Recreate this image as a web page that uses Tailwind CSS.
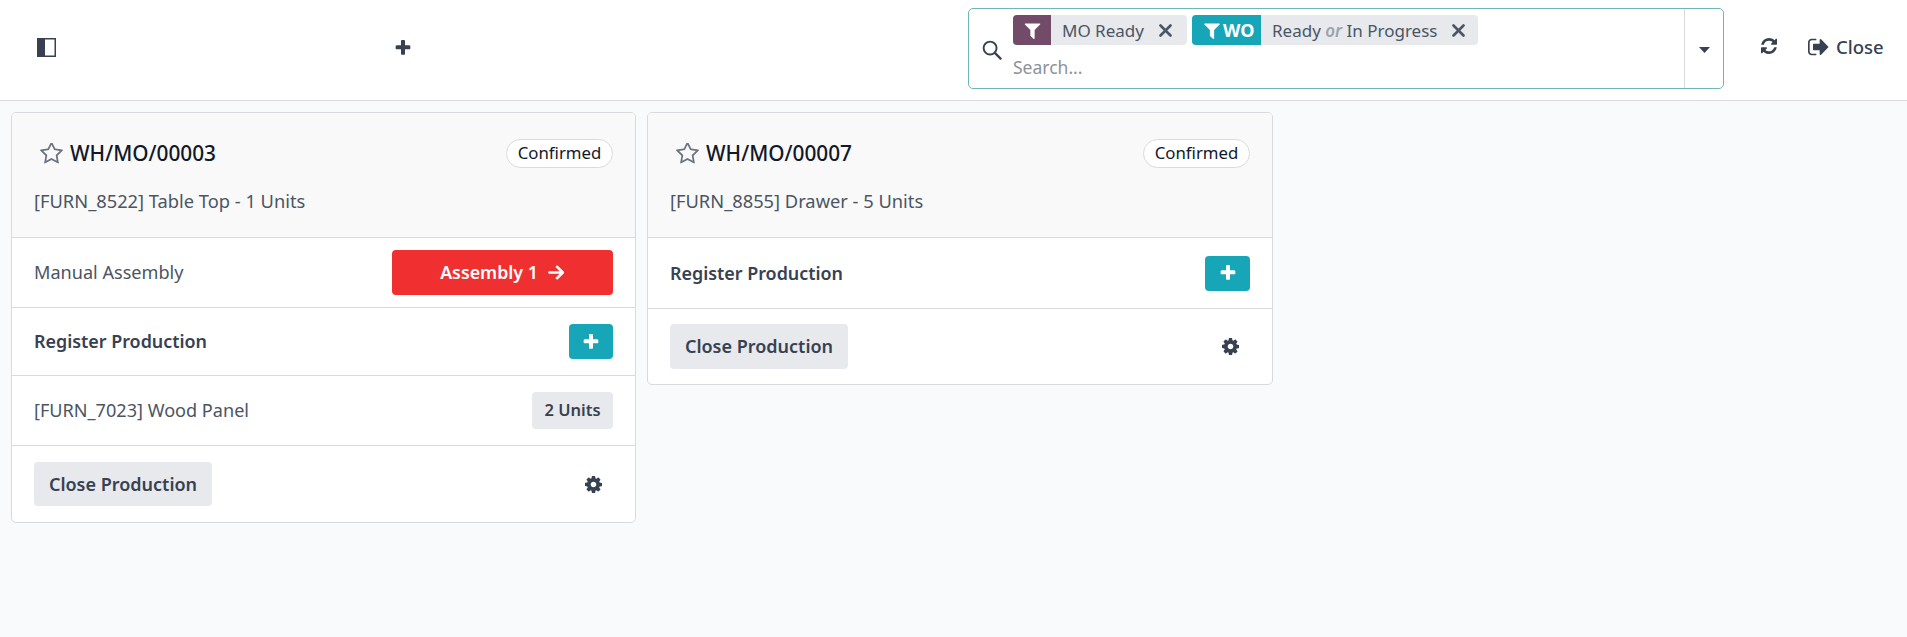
<!DOCTYPE html>
<html lang="en">
<head>
    <meta charset="UTF-8">
    <title>Shop Floor</title>
    <script src="https://cdn.jsdelivr.net/npm/@tailwindcss/browser@4"></script>
</head>
<body class="bg-[#f9fafb] text-[#374151] font-['Noto_Sans',sans-serif] text-[17px] h-[637px] overflow-hidden">
    <!-- top bar -->
    <header class="h-[101px] bg-white border-b border-[#d8dadd] flex items-center pb-[6px]">
        <button class="ml-[37px] w-[19px] h-[19px] flex">
            <svg class="w-[19px] h-[19px]" viewBox="0 0 19 19"><rect x="0.75" y="0.75" width="17.5" height="17.5" fill="none" stroke="#374151" stroke-width="1.5"/><rect x="1" y="1" width="7" height="17" fill="#374151"/></svg>
        </button>
        <button class="ml-[339px] mt-[2px] w-[16px] h-[16px] flex">
            <svg class="w-[16px] h-[16px]" viewBox="128 128 1536 1536"><path fill="#374151" d="M1600 736v192q0 40-28 68t-68 28h-416v416q0 40-28 68t-68 28h-192q-40 0-68-28t-28-68v-416h-416q-40 0-68-28t-28-68v-192q0-40 28-68t68-28h416v-416q0-40 28-68t68-28h192q40 0 68 28t28 68v416h416q40 0 68 28t28 68z"/></svg>
        </button>

        <div class="ml-[557px] w-[756px] h-[81px] mt-[3px] border border-[#6fb6b8] rounded-[5px] flex">
            <div class="w-[44px] flex items-center pl-[13px] pt-[2px] shrink-0">
                <svg class="w-[20px] h-[20px]" viewBox="0 0 21 21"><circle cx="8.500" cy="8.500" r="6.800" fill="none" stroke="#374151" stroke-width="2"/><path d="M13.500 13.500l6 6" stroke="#374151" stroke-width="2.400" stroke-linecap="round"/></svg>
            </div>
            <div class="flex-1 pt-[6px]">
                <div class="flex gap-[5px]">
                    <div class="h-[30px] w-[174px] bg-[#e7e9ed] rounded-[4px] flex items-center overflow-hidden">
                        <span class="w-[38px] h-full bg-[#714b67] flex items-center justify-center">
                            <svg class="w-[17px] h-[17px]" viewBox="128 128 1536 1536"><path fill="#fff" d="M1595 295q17 41-14 70l-493 493v742q0 42-39 59-13 5-25 5-27 0-45-19l-256-256q-19-19-19-45v-486l-493-493q-31-29-14-70 17-39 59-39h1280q42 0 59 39z"/></svg>
                        </span>
                        <span class="ml-[11px] text-[#4b5563] pt-[1px]">MO Ready</span>
                        <svg class="ml-[15px] w-[13px] h-[13px]" viewBox="0 0 13 13"><path d="M1.500 1.500l10 10M11.500 1.500l-10 10" stroke="#4b5563" stroke-width="2.600" stroke-linecap="round"/></svg>
                    </div>
                    <div class="h-[30px] w-[286px] bg-[#e7e9ed] rounded-[4px] flex items-center overflow-hidden">
                        <span class="w-[69px] h-full bg-[#17a5b8] flex items-center pl-[11px] gap-[2px] text-white font-bold text-[18px]">
                            <svg class="w-[18px] h-[17px] shrink-0" viewBox="128 128 1536 1536"><path fill="#fff" d="M1595 295q17 41-14 70l-493 493v742q0 42-39 59-13 5-25 5-27 0-45-19l-256-256q-19-19-19-45v-486l-493-493q-31-29-14-70 17-39 59-39h1280q42 0 59 39z"/></svg>
                            WO
                        </span>
                        <span class="ml-[11px] text-[#4b5563] pt-[1px]">Ready <em class="text-[#9ca3af] font-semibold">or</em> In Progress</span>
                        <svg class="ml-[15px] w-[13px] h-[13px]" viewBox="0 0 13 13"><path d="M1.500 1.500l10 10M11.500 1.500l-10 10" stroke="#4b5563" stroke-width="2.600" stroke-linecap="round"/></svg>
                    </div>
                </div>
                <div class="mt-[6px] text-[#8b929c] text-[17.500px] leading-[32px]">Search...</div>
            </div>
            <div class="w-[39px] border-l border-[#d8dadd] flex items-center justify-center pt-[2px] shrink-0">
                <svg class="w-[11px] h-[6px]" viewBox="0 0 11 6"><path d="M0 0h11L5.500 6z" fill="#374151"/></svg>
            </div>
        </div>

        <button class="ml-[37px] mb-[2px] flex">
            <svg class="w-[16px] h-[16px]" viewBox="128 128 1536 1536"><path fill="#374151" d="M1639 1056q0 5-1 7-64 268-268 434.500t-478 166.500q-146 0-282.500-55t-243.500-157l-129 129q-19 19-45 19t-45-19-19-45v-448q0-26 19-45t45-19h448q26 0 45 19t19 45-19 45l-137 137q71 66 161 102t187 36q134 0 250-65t186-179q11-17 53-117 8-23 30-23h192q13 0 22.500 9.500t9.500 22.500zm25-800v448q0 26-19 45t-45 19h-448q-26 0-45-19t-19-45 19-45l138-138q-148-137-349-137-134 0-250 65t-186 179q-11 17-53 117-8 23-30 23h-199q-13 0-22.500-9.500t-9.500-22.500v-7q65-268 270-434.500t480-166.500q146 0 284 55.500t245 156.500l130-129q19-19 45-19t45 19 19 45z"/></svg>
        </button>
        <button class="ml-[30px] flex items-center gap-[7px] font-medium text-[18.500px]">
            <svg class="w-[22px] h-[20px]" viewBox="0 128 1664 1536"><path fill="#374151" d="M704 1440q0 4 1 20t.5 26.500-3 23.500-10 19.500-20.500 6.500h-320q-119 0-203.500-84.500t-84.500-203.500v-704q0-119 84.500-203.500t203.500-84.500h320q13 0 22.500 9.500t9.500 22.500q0 4 1 20t.5 26.500-3 23.500-10 19.500-20.500 6.500h-320q-66 0-113 47t-47 113v704q0 66 47 113t113 47h312l11.500 1 11.500 3 8 5.500 7 9 2 13.500zm928-544q0 26-19 45l-544 544q-19 19-45 19t-45-19-19-45v-288h-448q-26 0-45-19t-19-45v-384q0-26 19-45t45-19h448v-288q0-26 19-45t45-19 45 19l544 544q19 19 19 45z"/></svg>
            Close
        </button>
    </header>

    <!-- work order cards -->
    <main class="flex items-start gap-[11px] pl-[11px] pt-[11px]">
        <section class="w-[625px] bg-white border border-[#d8dadd] rounded-[5px] overflow-hidden">
            <div class="h-[125px] bg-[#f9f9f9] border-b border-[#d8dadd] px-[22px]">
                <div class="flex items-center justify-between pt-[25px] h-[55px]">
                    <div class="flex items-center gap-[7px] ml-[6px] mt-[2px] text-[#111827] font-medium text-[20.800px]">
                        <svg class="w-[23px] h-[22px]" viewBox="64 128 1664 1600"><path fill="#6b7280" d="M1201 1004l306-297-422-62-189-382-189 382-422 62 306 297-73 421 378-199 377 199zm527-357q0 22-26 48l-363 354 86 500q1 7 1 20 0 50-41 50-19 0-40-12l-449-236-449 236q-22 12-40 12-21 0-31.500-14.500t-10.500-35.500q0-6 2-20l86-500-364-354q-25-27-25-48 0-37 56-46l502-73 225-455q19-41 49-41t49 41l225 455 502 73q56 9 56 46z"/></svg>
                        WH/MO/00003
                    </div>
                    <span class="h-[29px] w-[107px] flex items-center justify-center bg-white border border-[#d8dadd] rounded-full text-[#111827] text-[16.800px]">Confirmed</span>
                </div>
                <p class="mt-[21px] leading-[24px] text-[#4b5563] text-[18.300px]">[FURN_8522] Table Top - 1 Units</p>
            </div>
            <div class="h-[70px] border-b border-[#d8dadd] px-[22px] flex items-center justify-between">
                <span class="text-[#4b5563] text-[18.100px]">Manual Assembly</span>
                <button class="w-[221px] h-[45px] bg-[#f03030] rounded-[4px] text-white font-semibold text-[17.800px] flex items-center justify-center gap-[10px]">
                    Assembly 1
                    <svg class="w-[17px] h-[15px]" viewBox="0 0 17 15"><path d="M1.500 7.500h13M9 1.800l5.800 5.700L9 13.200" fill="none" stroke="#fff" stroke-width="2.600" stroke-linecap="round" stroke-linejoin="round"/></svg>
                </button>
            </div>
            <div class="h-[68px] border-b border-[#d8dadd] px-[22px] flex items-center justify-between">
                <span class="font-semibold text-[17.900px]">Register Production</span>
                <button class="w-[44px] h-[35px] bg-[#17a5b8] rounded-[4px] flex items-center justify-center">
                    <svg class="w-[16px] h-[16px]" viewBox="128 128 1536 1536"><path fill="#fff" d="M1600 736v192q0 40-28 68t-68 28h-416v416q0 40-28 68t-68 28h-192q-40 0-68-28t-28-68v-416h-416q-40 0-68-28t-28-68v-192q0-40 28-68t68-28h416v-416q0-40 28-68t68-28h192q40 0 68 28t28 68v416h416q40 0 68 28t28 68z"/></svg>
                </button>
            </div>
            <div class="h-[70px] border-b border-[#d8dadd] px-[22px] flex items-center justify-between">
                <span class="text-[#4b5563] text-[18.100px]">[FURN_7023] Wood Panel</span>
                <span class="w-[81px] h-[37px] bg-[#e7e9ed] rounded-[4px] flex items-center justify-center font-semibold text-[16.500px]">2 Units</span>
            </div>
            <div class="h-[76px] px-[22px] flex items-center justify-between">
                <button class="w-[178px] h-[44px] bg-[#e7e9ed] rounded-[4px] font-semibold text-[18px]">Close Production</button>
                <svg class="w-[17px] h-[17px] mr-[11px]" viewBox="128 128 1536 1536"><path fill="#374151" d="M1152 896q0-106-75-181t-181-75-181 75-75 181 75 181 181 75 181-75 75-181zm512-109v222q0 12-8 23t-20 13l-185 28q-19 54-39 91 35 50 107 138 10 12 10 25t-9 23q-27 37-99 108t-94 71q-12 0-26-9l-138-108q-44 23-91 38-16 136-29 186-7 28-36 28h-222q-14 0-24.500-8.500t-11.500-21.500l-28-184q-49-16-90-37l-141 107q-10 9-25 9-14 0-25-11-126-114-165-168-7-10-7-23 0-12 8-23 15-21 51-66.500t54-70.500q-27-50-41-99l-183-27q-13-2-21-12.500t-8-23.500v-222q0-12 8-23t19-13l186-28q14-46 39-92-40-57-107-138-10-12-10-24 0-10 9-23 26-36 98.500-107.500t94.500-71.500q13 0 26 10l138 107q44-23 91-38 16-136 29-186 7-28 36-28h222q14 0 24.500 8.500t11.500 21.500l28 184q49 16 90 37l142-107q9-9 24-9 13 0 25 10 129 119 165 170 7 8 7 22 0 12-8 23-15 21-51 66.500t-54 70.500q26 50 41 98l183 28q13 2 21 12.500t8 23.500z"/></svg>
            </div>
        </section>

        <section class="w-[626px] bg-white border border-[#d8dadd] rounded-[5px] overflow-hidden">
            <div class="h-[125px] bg-[#f9f9f9] border-b border-[#d8dadd] px-[22px]">
                <div class="flex items-center justify-between pt-[25px] h-[55px]">
                    <div class="flex items-center gap-[7px] ml-[6px] mt-[2px] text-[#111827] font-medium text-[20.800px]">
                        <svg class="w-[23px] h-[22px]" viewBox="64 128 1664 1600"><path fill="#6b7280" d="M1201 1004l306-297-422-62-189-382-189 382-422 62 306 297-73 421 378-199 377 199zm527-357q0 22-26 48l-363 354 86 500q1 7 1 20 0 50-41 50-19 0-40-12l-449-236-449 236q-22 12-40 12-21 0-31.500-14.500t-10.500-35.500q0-6 2-20l86-500-364-354q-25-27-25-48 0-37 56-46l502-73 225-455q19-41 49-41t49 41l225 455 502 73q56 9 56 46z"/></svg>
                        WH/MO/00007
                    </div>
                    <span class="h-[29px] w-[107px] flex items-center justify-center bg-white border border-[#d8dadd] rounded-full text-[#111827] text-[16.800px]">Confirmed</span>
                </div>
                <p class="mt-[21px] leading-[24px] text-[#4b5563] text-[18.300px]">[FURN_8855] Drawer - 5 Units</p>
            </div>
            <div class="h-[71px] border-b border-[#d8dadd] px-[22px] flex items-center justify-between">
                <span class="font-semibold text-[17.900px]">Register Production</span>
                <button class="w-[45px] h-[35px] bg-[#17a5b8] rounded-[4px] flex items-center justify-center">
                    <svg class="w-[16px] h-[16px]" viewBox="128 128 1536 1536"><path fill="#fff" d="M1600 736v192q0 40-28 68t-68 28h-416v416q0 40-28 68t-68 28h-192q-40 0-68-28t-28-68v-416h-416q-40 0-68-28t-28-68v-192q0-40 28-68t68-28h416v-416q0-40 28-68t68-28h192q40 0 68 28t28 68v416h416q40 0 68 28t28 68z"/></svg>
                </button>
            </div>
            <div class="h-[75px] px-[22px] flex items-center justify-between">
                <button class="w-[178px] h-[45px] bg-[#e7e9ed] rounded-[4px] font-semibold text-[18px]">Close Production</button>
                <svg class="w-[17px] h-[17px] mr-[11px]" viewBox="128 128 1536 1536"><path fill="#374151" d="M1152 896q0-106-75-181t-181-75-181 75-75 181 75 181 181 75 181-75 75-181zm512-109v222q0 12-8 23t-20 13l-185 28q-19 54-39 91 35 50 107 138 10 12 10 25t-9 23q-27 37-99 108t-94 71q-12 0-26-9l-138-108q-44 23-91 38-16 136-29 186-7 28-36 28h-222q-14 0-24.500-8.500t-11.500-21.500l-28-184q-49-16-90-37l-141 107q-10 9-25 9-14 0-25-11-126-114-165-168-7-10-7-23 0-12 8-23 15-21 51-66.500t54-70.500q-27-50-41-99l-183-27q-13-2-21-12.500t-8-23.500v-222q0-12 8-23t19-13l186-28q14-46 39-92-40-57-107-138-10-12-10-24 0-10 9-23 26-36 98.500-107.500t94.500-71.500q13 0 26 10l138 107q44-23 91-38 16-136 29-186 7-28 36-28h222q14 0 24.500 8.500t11.500 21.500l28 184q49 16 90 37l142-107q9-9 24-9 13 0 25 10 129 119 165 170 7 8 7 22 0 12-8 23-15 21-51 66.500t-54 70.500q26 50 41 98l183 28q13 2 21 12.500t8 23.500z"/></svg>
            </div>
        </section>
    </main>
</body>
</html>
